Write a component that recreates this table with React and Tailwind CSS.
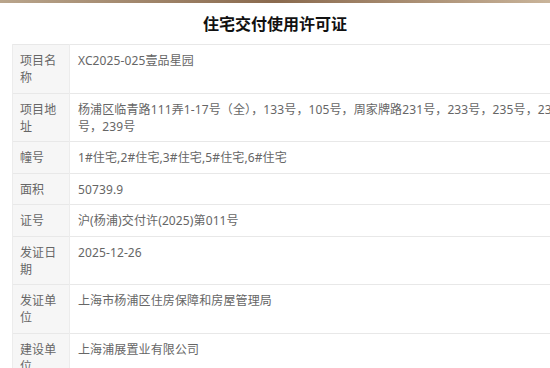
const ROWS = [
  { label: "项目名称", value: "XC2025-025壹品星园" },
  {
    label: "项目地址",
    value:
      "杨浦区临青路111弄1-17号（全），133号，105号，周家牌路231号，233号，235号，237号，239号",
  },
  { label: "幢号", value: "1#住宅,2#住宅,3#住宅,5#住宅,6#住宅" },
  { label: "面积", value: "50739.9" },
  { label: "证号", value: "沪(杨浦)交付许(2025)第011号" },
  { label: "发证日期", value: "2025-12-26" },
  { label: "发证单位", value: "上海市杨浦区住房保障和房屋管理局" },
  { label: "建设单位", value: "上海浦展置业有限公司" },
];

export default function App() {
  return (
    <div
      className="w-[550px] h-[368px] overflow-hidden bg-white"
      style={{ fontFamily: '"Noto Sans", "Noto Sans CJK SC", sans-serif' }}
    >
      <div className="h-[3px] w-full bg-gradient-to-r from-[#b9a58c] via-[#8a6a4e] to-[#c9b49a]" />
      <div className="h-[41px] flex items-center justify-center">
        <h1 className="text-[16px] font-bold text-[#111] leading-6">
          住宅交付使用许可证
        </h1>
      </div>
      <div className="pl-3">
        <table className="w-[566px] table-fixed border-collapse text-[12px] leading-[17px] tracking-[0.12px] text-[#666]">
          <colgroup>
            <col className="w-[57px]" />
            <col />
          </colgroup>
          <tbody>
            {ROWS.map((r, i) => (
              <tr key={i} className="border-t border-[#e8e8e8]">
                <td className="bg-[#f6f6f6] border-l border-[#ececec] px-[7px] pt-[7px] pb-[6.5px] align-top break-all">
                  {r.label}
                </td>
                <td className="pl-2 pr-2 pt-[7px] pb-[6.5px] align-top border-l border-[#ececec]">
                  {r.value}
                </td>
              </tr>
            ))}
          </tbody>
        </table>
      </div>
    </div>
  );
}
